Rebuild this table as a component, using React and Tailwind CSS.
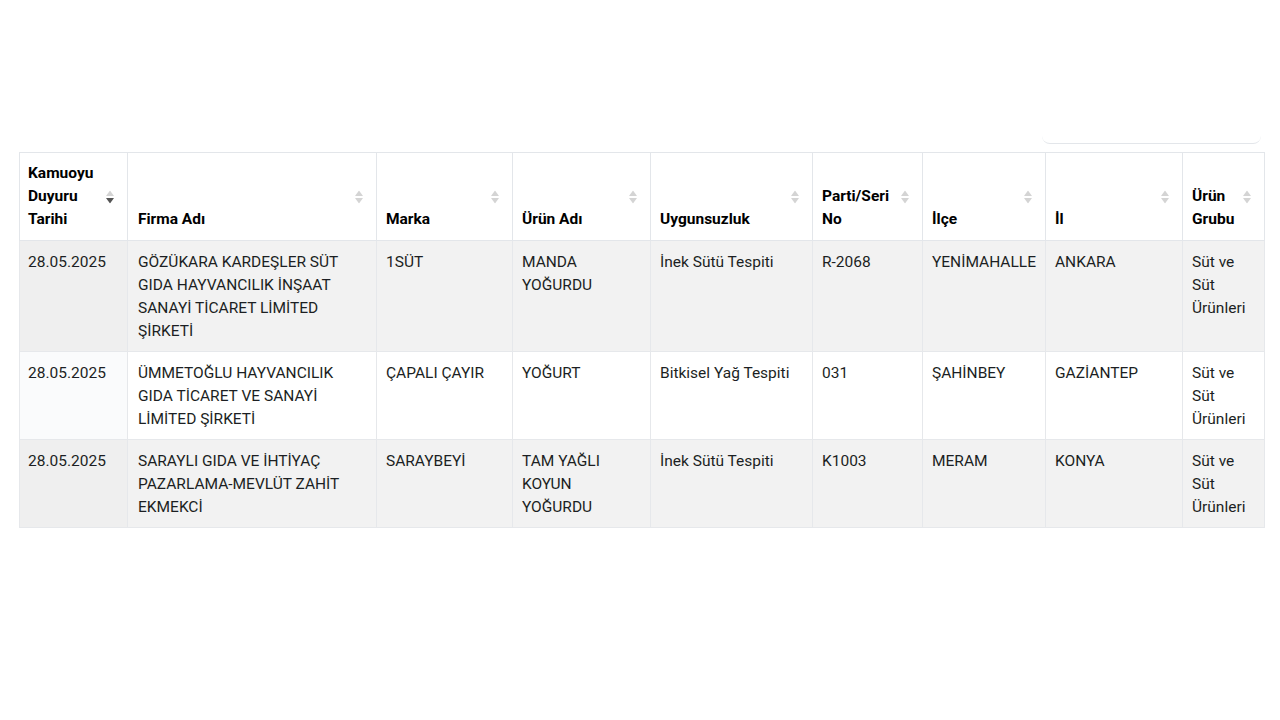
import React from "react";

const cols = [
  { label: "Kamuoyu Duyuru Tarihi", w: 108, active: true },
  { label: "Firma Adı", w: 249 },
  { label: "Marka", w: 136 },
  { label: "Ürün Adı", w: 138 },
  { label: "Uygunsuzluk", w: 162 },
  { label: "Parti/Seri No", w: 110 },
  { label: "İlçe", w: 123 },
  { label: "İl", w: 137 },
  { label: "Ürün Grubu", w: 82 },
];

const rows = [
  [
    "28.05.2025",
    "GÖZÜKARA KARDEŞLER SÜT GIDA HAYVANCILIK İNŞAAT SANAYİ TİCARET LİMİTED ŞİRKETİ",
    "1SÜT",
    "MANDA YOĞURDU",
    "İnek Sütü Tespiti",
    "R-2068",
    "YENİMAHALLE",
    "ANKARA",
    "Süt ve Süt Ürünleri",
  ],
  [
    "28.05.2025",
    "ÜMMETOĞLU HAYVANCILIK GIDA TİCARET VE SANAYİ LİMİTED ŞİRKETİ",
    "ÇAPALI ÇAYIR",
    "YOĞURT",
    "Bitkisel Yağ Tespiti",
    "031",
    "ŞAHİNBEY",
    "GAZİANTEP",
    "Süt ve Süt Ürünleri",
  ],
  [
    "28.05.2025",
    "SARAYLI GIDA VE İHTİYAÇ PAZARLAMA-MEVLÜT ZAHİT EKMEKCİ",
    "SARAYBEYİ",
    "TAM YAĞLI KOYUN YOĞURDU",
    "İnek Sütü Tespiti",
    "K1003",
    "MERAM",
    "KONYA",
    "Süt ve Süt Ürünleri",
  ],
];

function SortIcon({ active }) {
  return (
    <svg width="8" height="13" viewBox="0 0 8 13" className="block">
      <path d="M4 0 L8 5.5 L0 5.5 Z" fill="#d4d4d4" />
      <path d="M0 7.5 L8 7.5 L4 13 Z" fill={active ? "#555555" : "#d4d4d4"} />
    </svg>
  );
}

function padLeft(i) {
  if (i === 0) return "pl-[8px] ";
  if (i === 1) return "pl-[10px] ";
  return "pl-[9px] ";
}

export default function App() {
  return (
    <div
      className="w-[1280px] h-[720px] bg-white text-[#1c1f23] px-[19px] pt-[114px]"
      style={{ fontFamily: "Roboto, 'Liberation Sans', sans-serif" }}
    >
      <div className="flex justify-end">
        <div className="w-[219px] h-[30px] border-b border-[#e3e6ea] rounded-b-[8px]" />
      </div>
      <div className="mt-[8px]">
        <table className="table-fixed border-collapse w-[1245px] text-[15.5px] leading-[23px]">
          <colgroup>
            {cols.map((c, i) => (
              <col key={i} style={{ width: c.w }} />
            ))}
          </colgroup>
          <thead>
            <tr>
              {cols.map((c, i) => (
                <th
                  key={i}
                  className={
                    "relative border border-[#e3e6ea] bg-white text-left align-bottom font-bold text-black pr-[26px] pt-[9px] pb-[9px] " +
                    padLeft(i)
                  }
                >
                  {c.label}
                  <span className="absolute right-[13px] top-1/2 -translate-y-1/2">
                    <SortIcon active={c.active} />
                  </span>
                </th>
              ))}
            </tr>
          </thead>
          <tbody>
            {rows.map((r, ri) => (
              <tr key={ri} className={ri % 2 === 0 ? "bg-[#f2f2f2]" : "bg-white"}>
                {r.map((cell, ci) => (
                  <td
                    key={ci}
                    className={
                      "border border-[#e6e8eb] align-top pr-[8px] pt-[10px] pb-[8px] " +
                      padLeft(ci) +
                      (ci === 0 && ri % 2 === 1 ? "bg-[#fafbfc]" : "") +
                      (ci === 0 && ri % 2 === 0 ? "bg-[#efefef]" : "")
                    }
                  >
                    {cell}
                  </td>
                ))}
              </tr>
            ))}
          </tbody>
        </table>
      </div>
    </div>
  );
}
